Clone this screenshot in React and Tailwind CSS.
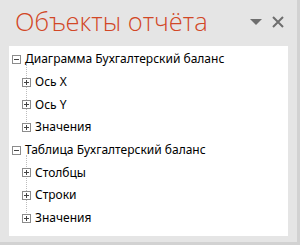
import { Fragment } from "react";

const tree = [
  { label: "Диаграмма Бухгалтерский баланс", children: ["Ось X", "Ось Y", "Значения"] },
  { label: "Таблица Бухгалтерский баланс", children: ["Столбцы", "Строки", "Значения"] },
];

function Box({ open }) {
  return (
    <span className="relative w-[9px] h-[9px] shrink-0 border border-[#8c8c8c] bg-white">
      <span className="absolute left-[1px] right-[1px] top-[3px] h-px bg-[#444]" />
      {!open && <span className="absolute top-[1px] bottom-[1px] left-[3px] w-px bg-[#444]" />}
    </span>
  );
}

export default function App() {
  return (
    <div className="w-[300px] h-[245px] bg-[#e5e5e5] border-r-[3px] border-b-[3px] border-[#d2d2d2] flex flex-col font-['Noto_Sans',sans-serif]">
      <div className="h-[46px] flex items-start pl-[15px] pr-[13px] pt-[6px]">
        <h1 className="flex-1 text-[25.5px] leading-[31px] font-light text-[#d24726] font-['Open_Sans',sans-serif]">
          Объекты отчёта
        </h1>
        <div className="flex items-center gap-[10px] pt-[10px]">
          <svg width="12" height="6" viewBox="0 0 12 6">
            <path d="M0 0h12L6 6z" fill="#6e6e6e" />
          </svg>
          <svg width="12" height="12" viewBox="0 0 12 12">
            <path d="M1 1l10 10M11 1L1 11" stroke="#6e6e6e" strokeWidth="2" />
          </svg>
        </div>
      </div>
      <div className="mx-[9px] h-[190px] bg-white pt-[2px] text-[12px] text-black">
        {tree.map((node) => (
          <Fragment key={node.label}>
            <div className="h-[22.7px] flex items-center pl-[3px] gap-[4px]">
              <Box open />
              <span>{node.label}</span>
            </div>
            <div className="relative">
              <span className="absolute left-[17px] top-[-6px] bottom-[11px] border-l border-dotted border-[#bdbdbd]" />
              {node.children.map((c) => (
                <div key={c} className="relative h-[22.7px] flex items-center pl-[13px] gap-[4px]">
                  <Box />
                  <span>{c}</span>
                </div>
              ))}
            </div>
          </Fragment>
        ))}
      </div>
    </div>
  );
}
